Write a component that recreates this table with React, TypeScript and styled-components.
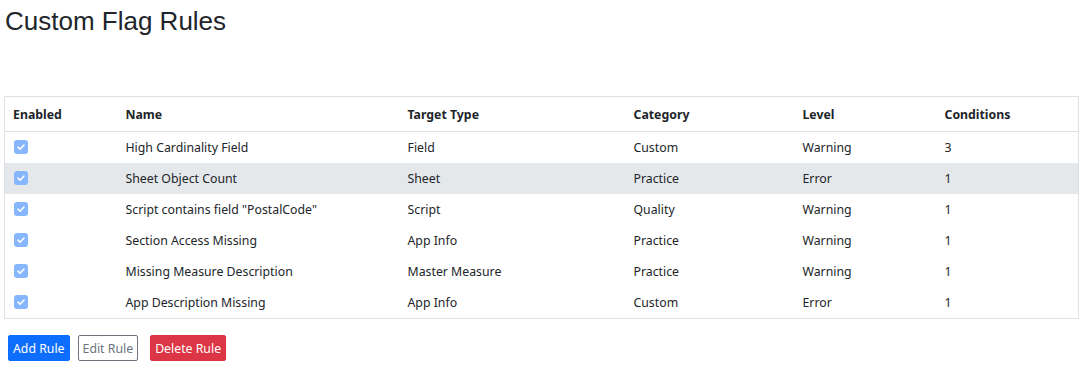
import * as React from 'react'
import styled, { createGlobalStyle } from 'styled-components'

type Rule = {
  name: string;
  target: string;
  category: string;
  level: string;
  conditions: number;
}

const rules: Rule[] = [
  { name: 'High Cardinality Field', target: 'Field', category: 'Custom', level: 'Warning', conditions: 3 },
  { name: 'Sheet Object Count', target: 'Sheet', category: 'Practice', level: 'Error', conditions: 1 },
  { name: 'Script contains field "PostalCode"', target: 'Script', category: 'Quality', level: 'Warning', conditions: 1 },
  { name: 'Section Access Missing', target: 'App Info', category: 'Practice', level: 'Warning', conditions: 1 },
  { name: 'Missing Measure Description', target: 'Master Measure', category: 'Practice', level: 'Warning', conditions: 1 },
  { name: 'App Description Missing', target: 'App Info', category: 'Custom', level: 'Error', conditions: 1 },
]

const columns = [
  { label: 'Enabled', width: 113 },
  { label: 'Name', width: 282 },
  { label: 'Target Type', width: 226 },
  { label: 'Category', width: 169 },
  { label: 'Level', width: 142 },
  { label: 'Conditions', width: 142 },
]

const GlobalStyle = createGlobalStyle`
  body {
    margin: 0;
    background: #fff;
    color: #212529;
    font-family: "Noto Sans", "Open Sans", sans-serif;
  }
`

export default function App() {
  return (
    <>
      <GlobalStyle />
      <Page>
        <Title>Custom Flag Rules</Title>
        <Table>
          <colgroup>
            {columns.map(c => <col key={c.label} style={{ width: c.width }} />)}
          </colgroup>
          <thead>
            <tr>
              {columns.map(c => <Th key={c.label}>{c.label}</Th>)}
            </tr>
          </thead>
          <tbody>
            {rules.map((r, i) => (
              <Row key={r.name} $active={i === 1}>
                <Td>
                  <Check>
                    <svg width="10" height="10" viewBox="0 0 10 10">
                      <path d="M2 5.2 L4.1 7.2 L8 3" fill="none" stroke="#fff" strokeWidth="1.6" strokeLinecap="round" strokeLinejoin="round" />
                    </svg>
                  </Check>
                </Td>
                <Td>{r.name}</Td>
                <Td>{r.target}</Td>
                <Td>{r.category}</Td>
                <Td>{r.level}</Td>
                <Td>{r.conditions}</Td>
              </Row>
            ))}
          </tbody>
        </Table>
        <Actions>
          <Button $variant="primary">Add Rule</Button>
          <Button $variant="outline">Edit Rule</Button>
          <Button $variant="danger">Delete Rule</Button>
        </Actions>
      </Page>
    </>
  )
}

const Page = styled.div`
  padding: 6px 7px 0 4px;
`

const Title = styled.h1`
  margin: 0 0 60px 1px;
  font-family: "Liberation Sans", Arial, sans-serif;
  font-size: 26px;
  font-weight: 400;
  line-height: 30px;
  color: #212529;
`

const Table = styled.table`
  width: 1075px;
  border-collapse: collapse;
  border: 1px solid #dee2e6;
  table-layout: fixed;
  font-size: 12.3px;
`

const Th = styled.th`
  height: 34px;
  padding: 0 8px;
  text-align: left;
  font-weight: 700;
  border-bottom: 1px solid #dee2e6;
`

const Row = styled.tr<{ $active?: boolean }>`
  background: ${p => (p.$active ? '#e5e8eb' : '#fff')};
`

const Td = styled.td`
  height: 31px;
  padding: 0 8px;
  vertical-align: middle;
  white-space: nowrap;
`

const Check = styled.span`
  display: flex;
  align-items: center;
  justify-content: center;
  width: 14px;
  height: 14px;
  border-radius: 3px;
  background: #86b7fe;
  margin: 0 0 1px 1px;
`

const Actions = styled.div`
  display: flex;
  gap: 8px;
  padding: 16px 0 0 4px;
`

const variants = {
  primary: { bg: '#0d6efd', border: '#0d6efd', color: '#fff' },
  outline: { bg: '#fff', border: '#6c757d', color: '#6c757d' },
  danger: { bg: '#dc3545', border: '#dc3545', color: '#fff' },
}

const Button = styled.button<{ $variant: keyof typeof variants }>`
  height: 26px;
  padding: 0 4px;
  font-family: inherit;
  font-size: 12.3px;
  border-radius: 2px;
  border: 1px solid ${p => variants[p.$variant].border};
  background: ${p => variants[p.$variant].bg};
  color: ${p => variants[p.$variant].color};
  &:last-child { margin-left: 4px; }
`
